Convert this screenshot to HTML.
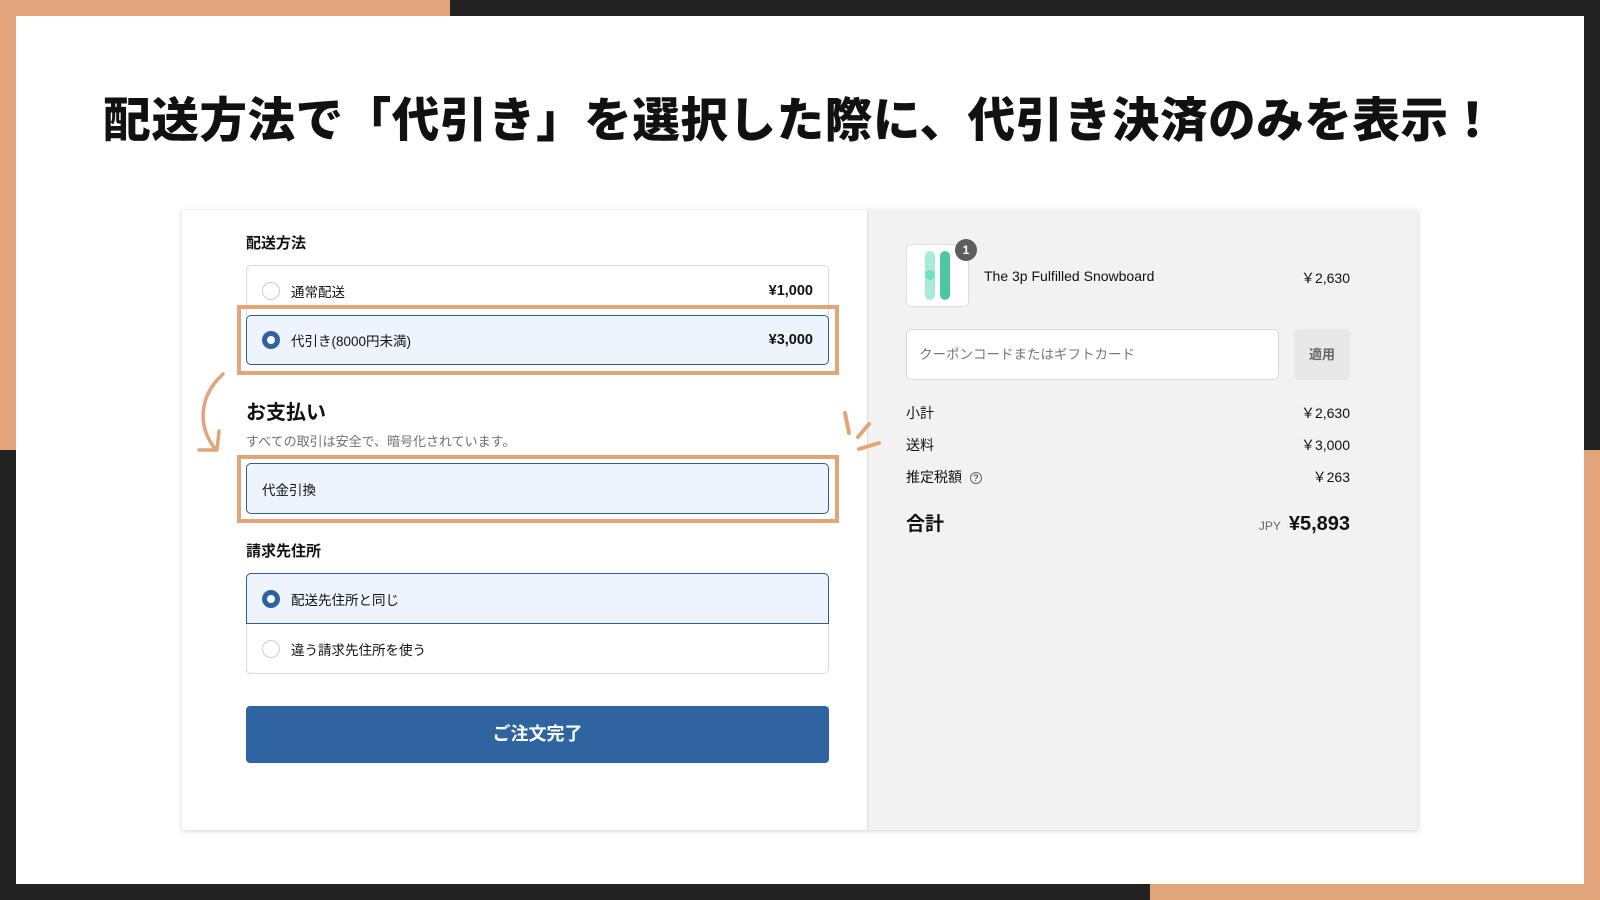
<!DOCTYPE html>
<html><head><meta charset="utf-8"><style>
*{margin:0;padding:0;box-sizing:border-box}
body{width:1600px;height:900px;position:relative;overflow:hidden;background:#222;font-family:"Liberation Sans","Noto Sans CJK JP",sans-serif;color:#111}
.a{position:absolute}
.or{background:#e2a579}
.title{left:16px;width:1568px;top:91px;text-align:center;font-size:47.5px;font-weight:900;letter-spacing:0.6px;color:#111;line-height:62px}
.card{left:182px;top:210px;width:1236px;height:620px;background:#fff;box-shadow:0 1px 5px rgba(0,0,0,.18)}
.right{left:867px;top:210px;width:551px;height:620px;background:#f2f2f2;border-left:1px solid #ddd}
.lbl{font-size:15px;font-weight:bold}
.box{border:1px solid #d9d9d9;border-radius:5px;background:#fff;overflow:hidden}
.row{height:50px;display:flex;align-items:center;padding:0 15px;font-size:13.5px;position:relative}
.sel{background:#eef4fd;border:1px solid #2e5e98;border-radius:5px}
.rad{width:18px;height:18px;border-radius:50%;border:1px solid #ccc;background:#fff;margin-right:11px;flex:none}
.rad.on{border:5.5px solid #2e63a0}
.price{margin-left:auto;font-weight:bold;font-size:14.5px}
.obox{border:4px solid #e2a579}
.rr{font-size:14px;display:flex;justify-content:space-between;width:444px;left:906px}
</style></head><body>
<div class="a" style="left:0;top:0;width:1600px;height:900px;background:#222"></div>
<div class="a or" style="left:0;top:0;width:450px;height:450px"></div>
<div class="a or" style="left:1150px;top:450px;width:450px;height:450px"></div>
<div class="a" style="left:16px;top:16px;width:1568px;height:868px;background:#fff"></div>
<div class="a title">配送方法で「代引き」を選択した際に、代引き決済のみを表示！</div>
<div class="a card"></div>
<div class="a right"></div>

<div class="a lbl" style="left:246px;top:232px">配送方法</div>
<div class="a box" style="left:246px;top:265px;width:583px;height:100px">
 <div class="row"><span class="rad"></span>通常配送<span class="price">¥1,000</span></div>
</div>
<div class="a sel" style="left:246px;top:315px;width:583px;height:50px"><div class="row" style="height:48px"><span class="rad on"></span>代引き(8000円未満)<span class="price">¥3,000</span></div></div>
<div class="a obox" style="left:237px;top:305px;width:602px;height:70px"></div>

<div class="a" style="left:246px;top:396px;font-size:20px;font-weight:bold">お支払い</div>
<div class="a" style="left:246px;top:431px;font-size:13px;color:#707070">すべての取引は安全で、暗号化されています。</div>
<div class="a sel" style="left:246px;top:463px;width:583px;height:51px"><div class="row" style="height:49px">代金引換</div></div>
<div class="a obox" style="left:237px;top:455px;width:602px;height:68px"></div>

<div class="a lbl" style="left:246px;top:540px">請求先住所</div>
<div class="a box" style="left:246px;top:573px;width:583px;height:101px">
 <div class="row" style="margin-top:50px"><span class="rad"></span>違う請求先住所を使う</div>
</div>
<div class="a sel" style="left:246px;top:573px;width:583px;height:51px;border-radius:5px 5px 0 0"><div class="row" style="height:49px"><span class="rad on"></span>配送先住所と同じ</div></div>

<div class="a" style="left:246px;top:706px;width:583px;height:57px;background:#2e64a0;border-radius:4px;color:#fff;font-size:18px;font-weight:bold;text-align:center;line-height:57px">ご注文完了</div>

<svg class="a" style="left:180px;top:360px" width="720" height="110" viewBox="180 360 720 110">
 <path d="M223 374 C200 395 196 425 216 450" fill="none" stroke="#e2a579" stroke-width="3.5" stroke-linecap="round"/>
 <path d="M199 450 L217 450 L219 431" fill="none" stroke="#e2a579" stroke-width="3.5" stroke-linecap="round" stroke-linejoin="round"/>
 <path d="M845 413 L849 433 M869 424 L858 437 M859 449 L879 443" stroke="#e2a579" stroke-width="4" stroke-linecap="round"/>
</svg>

<div class="a" style="left:906px;top:244px;width:63px;height:63px;border:1px solid #ddd;border-radius:5px;background:#fff"></div>
<svg class="a" style="left:906px;top:244px" width="63" height="63"><rect x="19" y="7" width="10" height="49" rx="5" fill="#a6ecd6"/><circle cx="24" cy="31" r="5" fill="#6fe0bd"/><rect x="34" y="7" width="10" height="49" rx="5" fill="#4cc7a2"/></svg>
<div class="a" style="left:955px;top:239px;width:22px;height:22px;border-radius:50%;background:#5d5d5d;color:#fff;font-size:12px;font-weight:bold;text-align:center;line-height:22px">1</div>
<div class="a" style="left:984px;top:268px;font-size:14px">The 3p Fulfilled Snowboard</div>
<div class="a" style="left:1250px;width:100px;text-align:right;top:268px;font-size:14px">￥2,630</div>

<div class="a" style="left:906px;top:329px;width:373px;height:51px;background:#fff;border:1px solid #d9d9d9;border-radius:5px;font-size:13.5px;color:#777;line-height:49px;padding-left:12px">クーポンコードまたはギフトカード</div>
<div class="a" style="left:1294px;top:329px;width:56px;height:51px;background:#e8e8e8;border-radius:5px;font-size:13px;font-weight:bold;color:#666;text-align:center;line-height:51px">適用</div>

<div class="a rr" style="top:403px"><span>小計</span><span>￥2,630</span></div>
<div class="a rr" style="top:435px"><span>送料</span><span>￥3,000</span></div>
<div class="a rr" style="top:467px"><span>推定税額 <span style="display:inline-block;width:12px;height:12px;border:1px solid #666;border-radius:50%;font-size:9px;text-align:center;line-height:10px;vertical-align:1px;margin-left:4px">?</span></span><span>￥263</span></div>
<div class="a rr" style="top:509px;align-items:baseline"><span style="font-size:19px;font-weight:bold">合計</span><span><span style="font-size:12px;color:#666;margin-right:8px">JPY</span><span style="font-size:20px;font-weight:bold">¥5,893</span></span></div>
</body></html>
